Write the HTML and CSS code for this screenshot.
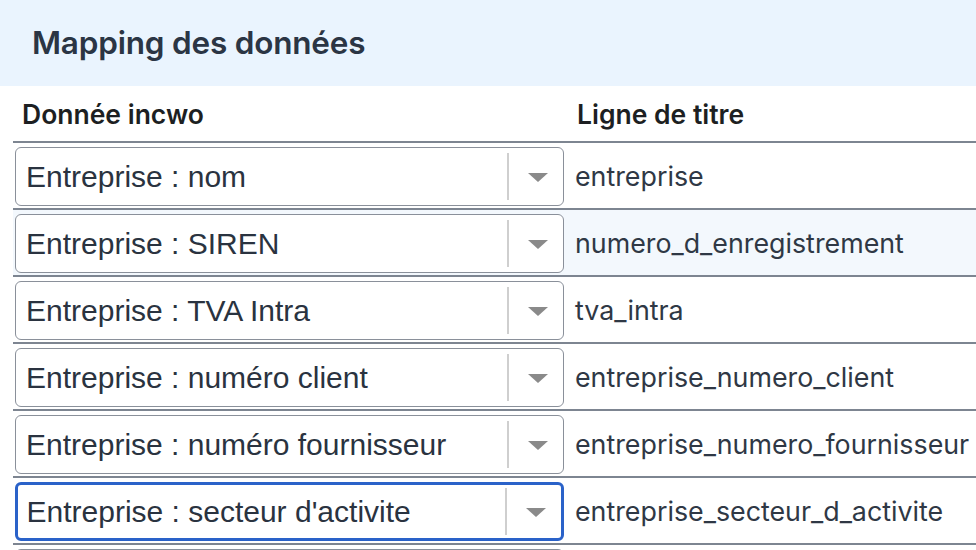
FILE: index.html
```html
<!DOCTYPE html>
<html lang="fr">
<head>
<meta charset="utf-8">
<link rel="stylesheet" href="styles.css">
</head>
<body>
<div class="panel">
  <div class="panel-head"><h2 class="panel-title">Mapping des données</h2></div>
  <div class="panel-body">
    <table class="map">
      <thead>
        <tr><th class="c1">Donnée incwo</th><th class="c2">Ligne de titre</th></tr>
      </thead>
      <tbody>
        <tr><td class="c1"><div class="sel"><span class="sel-val">Entreprise : nom</span><span class="sel-sep"></span><span class="sel-arrow"></span></div></td><td class="c2">entreprise</td></tr>
        <tr class="alt"><td class="c1"><div class="sel"><span class="sel-val">Entreprise : SIREN</span><span class="sel-sep"></span><span class="sel-arrow"></span></div></td><td class="c2">numero_d_enregistrement</td></tr>
        <tr><td class="c1"><div class="sel"><span class="sel-val">Entreprise : TVA Intra</span><span class="sel-sep"></span><span class="sel-arrow"></span></div></td><td class="c2">tva_intra</td></tr>
        <tr><td class="c1"><div class="sel"><span class="sel-val">Entreprise : numéro client</span><span class="sel-sep"></span><span class="sel-arrow"></span></div></td><td class="c2">entreprise_numero_client</td></tr>
        <tr><td class="c1"><div class="sel"><span class="sel-val">Entreprise : numéro fournisseur</span><span class="sel-sep"></span><span class="sel-arrow"></span></div></td><td class="c2">entreprise_numero_fournisseur</td></tr>
        <tr><td class="c1"><div class="sel focus"><span class="sel-val">Entreprise : secteur d'activite</span><span class="sel-sep"></span><span class="sel-arrow"></span></div></td><td class="c2">entreprise_secteur_d_activite</td></tr>
        <tr><td class="c1"><div class="sel"><span class="sel-val"></span><span class="sel-sep"></span><span class="sel-arrow"></span></div></td><td class="c2"></td></tr>
      </tbody>
    </table>
  </div>
</div>
</body>
</html>
```

FILE: styles.css
```css
html, body {
  margin: 0;
  padding: 0;
  background: #ffffff;
  overflow: hidden;
}
body {
  width: 976px;
  height: 550px;
  font-family: Inter, "Liberation Sans", sans-serif;
}
.panel-head {
  background: #eaf4fe;
  height: 86px;
  display: flex;
  align-items: center;
  padding-left: 32px;
  padding-bottom: 2px;
  box-sizing: border-box;
}
.panel-title {
  margin: 0;
  font-family: Inter, sans-serif;
  font-weight: 600;
  font-size: 31.5px;
  color: #2b3544;
  letter-spacing: -0.2px;
}
.panel-body {
  padding-left: 13px;
}
.map {
  border-collapse: collapse;
  width: 1000px;
}
.map th {
  height: 55px;
  text-align: left;
  font-family: Inter, sans-serif;
  font-weight: 600;
  font-size: 26.5px;
  color: #1d1f22;
  border-bottom: 2px solid #7d8591;
  padding: 0;
  vertical-align: middle;
}
.map th.c1 { padding-left: 9px; width: 542px; }
.map th.c2 { padding-left: 11px; }
.map td {
  border-bottom: 2px solid #7d8591;
  padding: 0;
  height: 65px;
  box-sizing: border-box;
}
.map td.c1 {
  padding: 4px 2px 2px 2px;
}
.map td.c2 {
  padding-left: 9px;
  font-family: Inter, sans-serif;
  font-size: 26.8px;
  color: #2f3845;
  vertical-align: middle;
}
.map tr.alt td { background: #f3f8fd; }
.sel {
  height: 59px;
  width: 549px;
  box-sizing: border-box;
  border: 1.5px solid #8a909a;
  border-radius: 6px;
  background: #ffffff;
  display: flex;
  align-items: center;
  padding-left: 10px;
}
.sel.focus {
  border: 3px solid #2a62c9;
  padding-left: 8.5px;
}
.sel-val {
  flex: 1;
  font-family: "Liberation Sans", Arial, sans-serif;
  font-size: 30px;
  color: #2a3340;
  white-space: nowrap;
  overflow: hidden;
}
.sel-sep {
  width: 2px;
  height: 47px;
  background: #cfcfcf;
}
.sel-arrow {
  width: 0;
  height: 0;
  border-left: 10px solid transparent;
  border-right: 10px solid transparent;
  border-top: 9px solid #8a8a8a;
  margin: 2px 15px 0 19px;
}
```
